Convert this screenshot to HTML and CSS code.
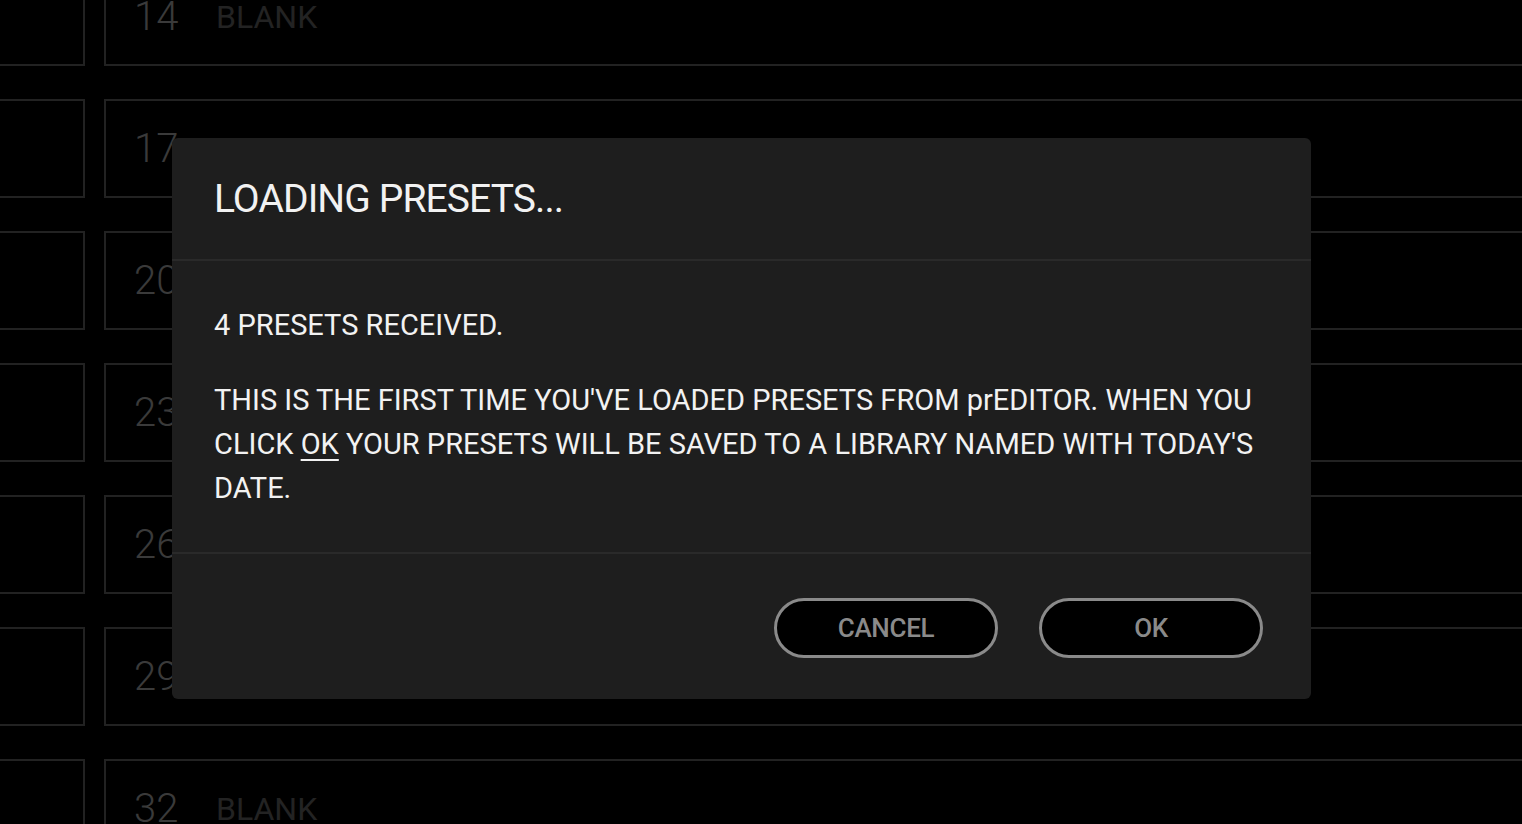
FILE: index.html
```html
<!DOCTYPE html>
<html lang="en">
<head>
<meta charset="utf-8">
<title>Loading presets</title>
<link rel="stylesheet" href="styles.css">
</head>
<body>
<main class="library">
  <div class="row"><div class="slot"></div><div class="preset"><span class="num">14</span><span class="name">BLANK</span></div></div>
  <div class="row"><div class="slot"></div><div class="preset"><span class="num">17</span><span class="name">BLANK</span></div></div>
  <div class="row"><div class="slot"></div><div class="preset"><span class="num">20</span><span class="name">BLANK</span></div></div>
  <div class="row"><div class="slot"></div><div class="preset"><span class="num">23</span><span class="name">BLANK</span></div></div>
  <div class="row"><div class="slot"></div><div class="preset"><span class="num">26</span><span class="name">BLANK</span></div></div>
  <div class="row"><div class="slot"></div><div class="preset"><span class="num">29</span><span class="name">BLANK</span></div></div>
  <div class="row"><div class="slot"></div><div class="preset"><span class="num">32</span><span class="name">BLANK</span></div></div>
</main>

<div class="dialog" role="dialog" aria-labelledby="dlg-title">
  <header class="dialog-head">
    <h1 id="dlg-title" class="dialog-title">LOADING PRESETS...</h1>
  </header>
  <section class="dialog-body">
    <p class="msg">4 PRESETS RECEIVED.</p>
    <p class="msg">THIS IS THE FIRST TIME YOU'VE LOADED PRESETS FROM prEDITOR. WHEN YOU CLICK <u class="ok-link">OK</u> YOUR PRESETS WILL BE SAVED TO A LIBRARY NAMED WITH TODAY'S DATE.</p>
  </section>
  <footer class="dialog-foot">
    <button class="btn" type="button">CANCEL</button>
    <button class="btn" type="button">OK</button>
  </footer>
</div>
</body>
</html>
```

FILE: styles.css
```css
html, body {
  margin: 0;
  padding: 0;
  background: #000;
  width: 1522px;
  height: 824px;
  overflow: hidden;
}

body {
  font-family: Roboto, "Liberation Sans", sans-serif;
  color: #f2f2f2;
}

.library {
  display: flex;
  flex-direction: column;
  gap: 33px;
  margin-top: -33px;
  margin-left: -17px;
}

.row {
  display: flex;
  gap: 19px;
  height: 99px;
}

.slot {
  width: 102px;
  flex: none;
  border: 2px solid #222;
  box-sizing: border-box;
}

.preset {
  width: 1460px;
  flex: none;
  border: 2px solid #222;
  box-sizing: border-box;
  display: flex;
  align-items: center;
  padding-left: 28px;
}

.num {
  font-size: 40px;
  font-weight: 300;
  color: #3a3a3a;
  width: 82px;
}

.name {
  font-size: 32px;
  color: #232323;
}

.dialog {
  position: absolute;
  left: 172px;
  top: 138px;
  width: 1139px;
  height: 561px;
  background: #1e1e1e;
  border-radius: 6px;
  display: flex;
  flex-direction: column;
}

.dialog-head {
  height: 121px;
  border-bottom: 2px solid #2a2a2a;
  padding: 0 42px;
  display: flex;
  align-items: center;
}

.dialog-title {
  margin: 0;
  margin-top: 1px;
  font-size: 39px;
  font-weight: 400;
  line-height: 1;
  letter-spacing: -0.9px;
}

.dialog-body {
  height: 293px;
  box-sizing: border-box;
  border-bottom: 2px solid #2a2a2a;
  padding: 42px 42px 0;
}

.msg {
  margin: 0 0 31px;
  font-size: 29px;
  line-height: 44px;
}

.ok-link {
  text-underline-offset: 5px;
  text-decoration-thickness: 2px;
}

.dialog-foot {
  flex: 1;
  display: flex;
  justify-content: flex-end;
  align-items: flex-start;
  gap: 41px;
  padding: 44px 48px 0 0;
}

.btn {
  width: 224px;
  height: 60px;
  border: 3px solid #8a8a8a;
  border-radius: 30px;
  background: #000;
  color: #8a8a8a;
  font-family: Roboto, "Liberation Sans", sans-serif;
  font-size: 26px;
  font-weight: 500;
  letter-spacing: -0.3px;
  padding: 0;
}
```
